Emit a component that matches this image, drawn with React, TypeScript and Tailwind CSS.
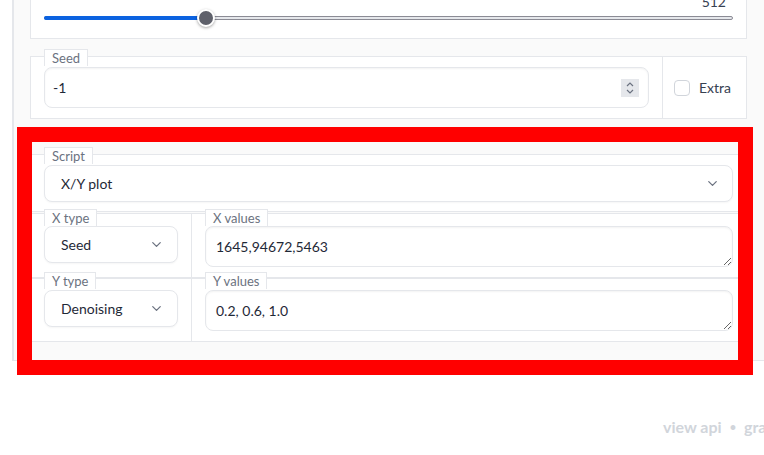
import { ChevronDown } from "lucide-react"

// small bordered caption that sits over the top edge of a block
function Label({ text, offset = "-mt-[8px]" }: { text: string; offset?: string }) {
  return (
    <span
      className={`${offset} self-start h-[17px] px-[7px] border border-b-0 border-[#e5e7eb] bg-white text-[13px] leading-[16px] text-[#6b7280]`}
    >
      {text}
    </span>
  )
}

function Dropdown({ value, h = "h-[37px]", pr = "pr-[12px]" }: { value: string; h?: string; pr?: string }) {
  return (
    <div
      className={`${h} ${pr} flex items-center justify-between pl-[16px] rounded-lg border border-[#e5e7eb] bg-white shadow-[0_1px_2px_rgba(0,0,0,0.04)] text-[14px] text-[#1f2937]`}
    >
      <span>{value}</span>
      <ChevronDown size={15} strokeWidth={2} className="text-[#6b7280]" />
    </div>
  )
}

function TextBox({ value }: { value: string }) {
  return (
    <textarea
      readOnly
      rows={1}
      value={value}
      className="block h-[41px] w-full resize-y rounded-lg border border-[#e5e7eb] bg-white pl-[10px] pt-[10px] pb-[9px] text-[14px] leading-[20px] text-[#1f2937] shadow-[inset_0_1px_2px_rgba(0,0,0,0.05)] outline-none"
    />
  )
}

export default function App() {
  return (
    <div className="relative w-[764px] h-[455px] overflow-hidden bg-white font-[Lato]">
      {/* === Outer form column === */}
      <div className="ml-[12px] w-[752px] flex flex-col border-l-2 border-b border-[#e5e7eb] bg-[#fafafa] pl-[16px] pr-[17px] pb-[18px]">
        {/* === Slider (top cut off) === */}
        <div className="-mt-[12px] flex flex-col border border-[#e5e7eb] bg-white px-[13px] pt-[4px] pb-[11px]">
          <div className="h-[17px] flex justify-end pr-[7px] text-[14px] leading-[17px] text-[#374151]">512</div>
          <div className="relative -mt-[1px] h-[18px]">
            <div className="absolute inset-x-0 top-[7px] h-[4px] rounded-full border border-[#8b8b95] bg-[#e5e7eb]" />
            <div className="absolute left-0 top-[7px] h-[4px] w-[162px] rounded-full bg-[#0b62e0]" />
            <div className="absolute left-[153px] top-0 h-[18px] w-[18px] rounded-full border-2 border-white bg-[#5f616b] shadow-[0_1px_3px_rgba(0,0,0,0.35)]" />
          </div>
        </div>

        {/* === Seed + Extra === */}
        <div className="mt-[17px] flex border border-[#e5e7eb] bg-white">
          <div className="flex-1 flex flex-col px-[13px] pb-[10px]">
            <Label text="Seed" />
            <div className="mt-[1px] h-[41px] flex items-center justify-between rounded-lg border border-[#e5e7eb] bg-white pl-[8px] pr-[9px] text-[14px] text-[#1f2937] shadow-[inset_0_1px_2px_rgba(0,0,0,0.05)]">
              <span>-1</span>
              <div className="w-[18px] h-[18px] bg-[#e5e7eb] flex items-center justify-center">
                <svg width="10" height="14" viewBox="0 0 10 14" fill="none" stroke="#6b7280" strokeWidth="1.2">
                  <polyline points="2,5 5,2 8,5" />
                  <polyline points="2,9 5,12 8,9" />
                </svg>
              </div>
            </div>
          </div>
          <div className="w-[84px] border-l border-[#e5e7eb] flex items-center pl-[11px] gap-[9px]">
            <span className="w-[16px] h-[16px] rounded-[4px] border border-[#d1d5db] bg-white" />
            <span className="text-[14px] text-[#374151]">Extra</span>
          </div>
        </div>

        {/* === Script === */}
        <div className="mt-[35px] flex flex-col border border-[#e5e7eb] bg-white px-[13px] pb-[9px]">
          <Label text="Script" />
          <div className="mt-[1px]">
            <Dropdown value="X/Y plot" />
          </div>
        </div>

        {/* === X row === */}
        <div className="mt-[1px] flex border border-[#e5e7eb] bg-white">
          <div className="w-[161px] flex flex-col border-r border-[#e5e7eb] px-[13px]">
            <Label text="X type" offset="-mt-[5px]" />
            <Dropdown value="Seed" pr="pr-[13px]" />
          </div>
          <div className="flex-1 flex flex-col px-[13px] pb-[10px]">
            <Label text="X values" offset="-mt-[5px]" />
            <TextBox value="1645,94672,5463" />
          </div>
        </div>

        {/* === Y row === */}
        <div className="flex border border-[#e5e7eb] bg-white">
          <div className="w-[161px] flex flex-col border-r border-[#e5e7eb] px-[13px]">
            <Label text="Y type" offset="-mt-[7px]" />
            <div className="mt-[1px]">
              <Dropdown value="Denoising" pr="pr-[13px]" />
            </div>
          </div>
          <div className="flex-1 flex flex-col px-[13px] pb-[10px]">
            <Label text="Y values" offset="-mt-[7px]" />
            <div className="mt-[1px]">
              <TextBox value="0.2, 0.6, 1.0" />
            </div>
          </div>
        </div>
      </div>

      {/* === Footer === */}
      <div className="mt-[54px] pl-[663px] flex items-center gap-[8px] whitespace-nowrap text-[16px] font-bold text-[#d1d5db]">
        <span>view api</span>
        <span className="text-[11px]">•</span>
        <span>gradio</span>
      </div>

      {/* === Red highlight overlay === */}
      <div className="absolute left-[17px] top-[127px] w-[736px] h-[248px] border-[15px] border-[#ff0000] pointer-events-none" />
    </div>
  )
}
